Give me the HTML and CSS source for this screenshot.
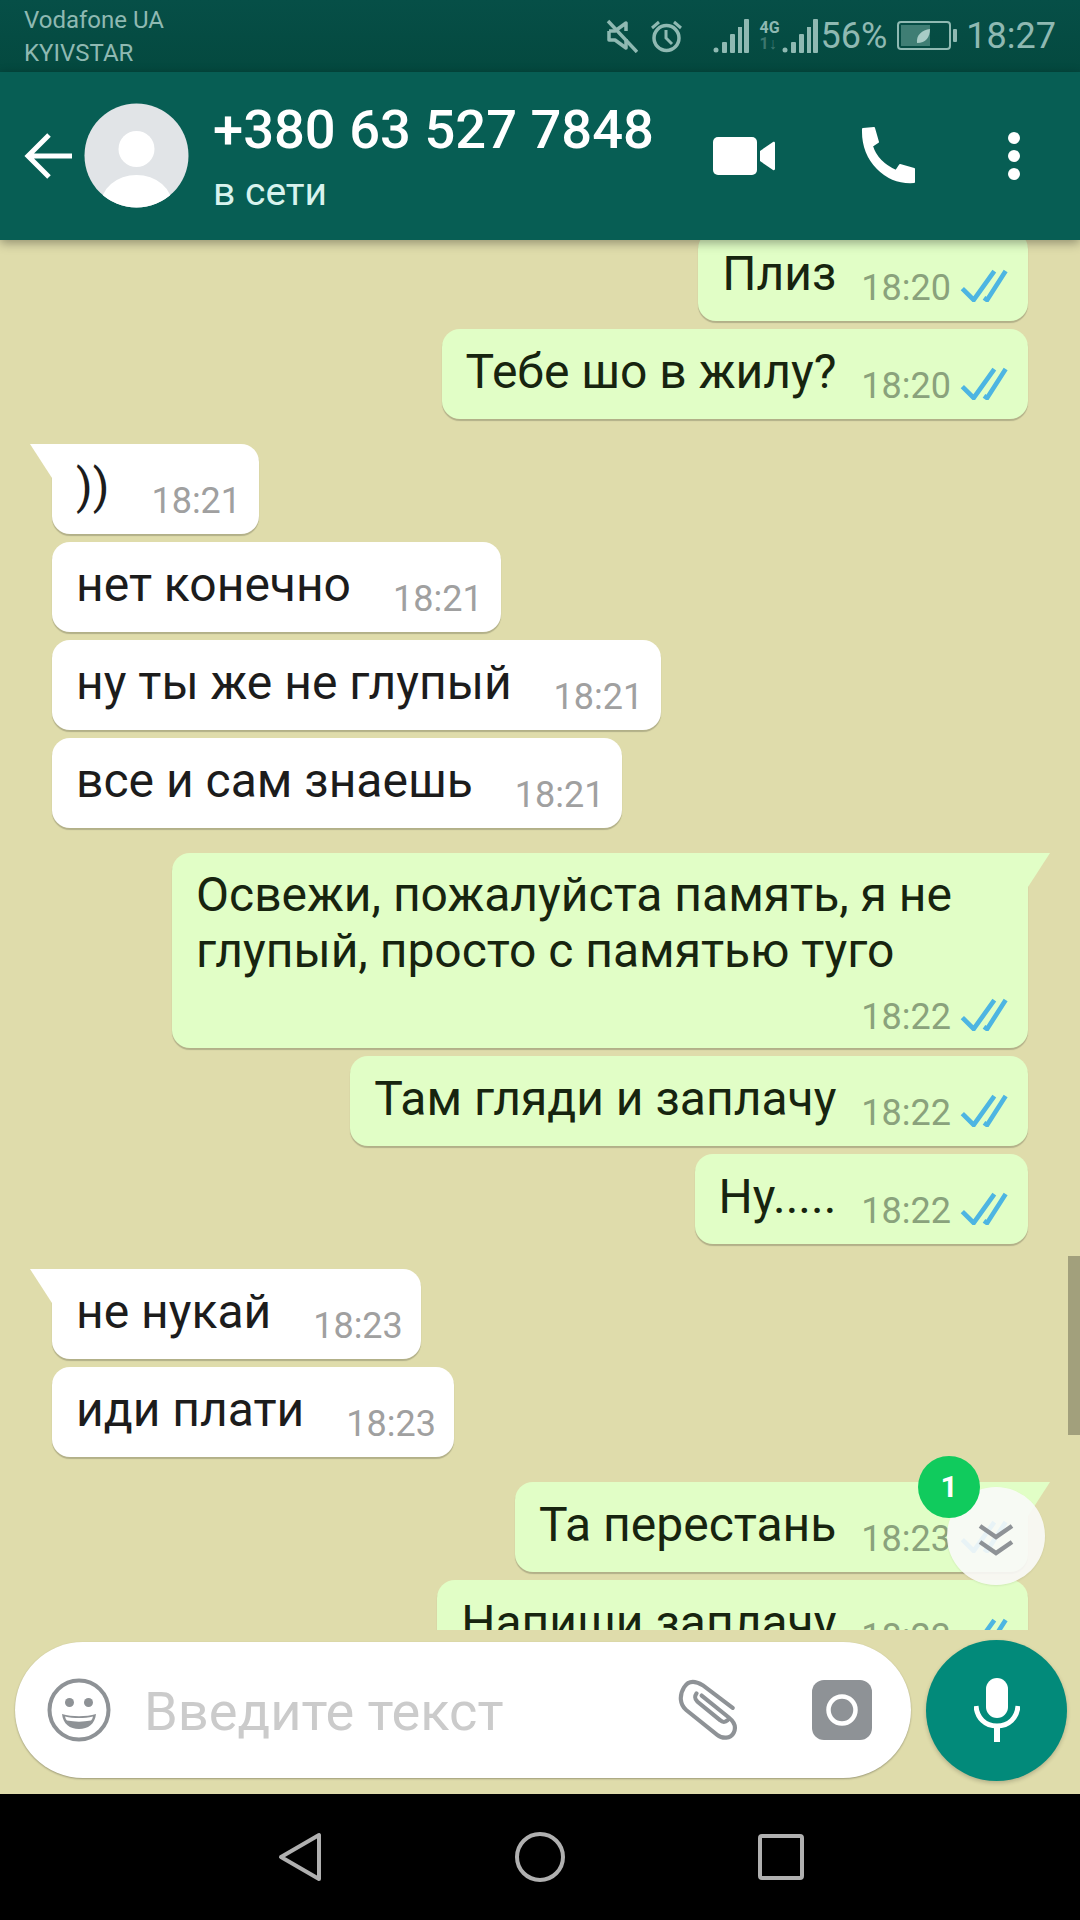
FILE: index.html
```html
<!DOCTYPE html>
<html lang="ru">
<head>
    <meta charset="UTF-8">
    <meta name="viewport" content="width=device-width, initial-scale=1.0">
    <title>WhatsApp</title>
    <link rel="stylesheet" href="styles.css">
</head>
<body>
    <svg class="defs" width="0" height="0">
        <symbol id="ticks" viewBox="0 0 46 32">
            <path d="M2 19l11 11L33 2M23 28l3 2L44 2" fill="none" stroke="#4db5e2" stroke-width="4.5"/>
        </symbol>
    </svg>

    <!-- Status bar -->
    <div class="statusbar">
        <div class="carriers">
            <div>Vodafone UA</div>
            <div>KYIVSTAR</div>
        </div>
        <div class="status-icons">
            <svg class="ic-mute" width="32" height="34" viewBox="0 0 32 34">
                <path d="M3 12h6l11-8v8M20 20v9l-11-8H3v-9" fill="none" stroke="#8fb9b2" stroke-width="3.5" stroke-linejoin="round"/>
                <path d="M2 2l29 31" stroke="#8fb9b2" stroke-width="3.5"/>
            </svg>
            <svg class="ic-alarm" width="33" height="34" viewBox="0 0 33 34">
                <circle cx="16.500" cy="19" r="12.500" fill="none" stroke="#8fb9b2" stroke-width="3.500"/>
                <path d="M16 11v8l6 6M2 9l7-6M31 9l-7-6" fill="none" stroke="#8fb9b2" stroke-width="3"/>
            </svg>
            <svg class="ic-signal" width="36" height="34" viewBox="0 0 36 34">
                <g fill="#8fb9b2"><circle cx="3" cy="31" r="2.500"/><rect x="9" y="23" width="5" height="11" rx="1"/><rect x="17" y="15" width="5" height="19" rx="1"/><rect x="25" y="8" width="4" height="26"/><rect x="31" y="0" width="5" height="34" rx="1"/></g>
            </svg>
            <div class="net">
                <span class="net-4g">4G</span>
                <span class="net-arrows">1↓</span>
            </div>
            <svg class="ic-signal2" width="36" height="34" viewBox="0 0 36 34">
                <g fill="#8fb9b2"><circle cx="3" cy="31" r="2.500"/><rect x="9" y="23" width="5" height="11" rx="1"/><rect x="17" y="15" width="5" height="19" rx="1"/><rect x="25" y="8" width="4" height="26"/><rect x="31" y="0" width="5" height="34" rx="1"/></g>
            </svg>
            <span class="status-text pct">56%</span>
            <svg class="ic-battery" width="61" height="30" viewBox="0 0 61 30">
                <rect x="1" y="1" width="52" height="27" rx="3" fill="none" stroke="#8fb9b2" stroke-width="2"/>
                <rect x="4" y="4" width="29" height="21" fill="#3f7e74"/>
                <rect x="56" y="8" width="4" height="13" rx="1" fill="#8fb9b2"/>
                <path d="M20 22c-1-8 5-13 13-14 0 8-4 14-13 14z" fill="#a9ccc6"/>
            </svg>
            <span class="status-text time-now">18:27</span>
        </div>
    </div>

    <!-- Toolbar -->
    <div class="toolbar">
        <svg class="back" width="50" height="48" viewBox="0 0 50 48">
            <path d="M48 24H4M25 3L4 24l21 21" fill="none" stroke="#fff" stroke-width="5"/>
        </svg>
        <svg class="avatar" width="105" height="105" viewBox="0 0 105 105">
            <defs><clipPath id="avatarClip"><circle cx="52.500" cy="52.500" r="52"/></clipPath></defs>
            <circle cx="52.500" cy="52.500" r="52" fill="#e1e4e7"/>
            <g clip-path="url(#avatarClip)" fill="#fff">
                <circle cx="52.500" cy="46" r="18"/>
                <ellipse cx="52.500" cy="103" rx="36" ry="31"/>
            </g>
        </svg>
        <div class="contact">
            <div class="contact-name">+380 63 527 7848</div>
            <div class="contact-status">в сети</div>
        </div>
        <div class="actions">
            <svg width="62" height="40" viewBox="0 0 62 40">
                <rect x="0" y="1" width="44" height="38" rx="5" fill="#fff"/>
                <path d="M47 15l13-9c1-.5 2 0 2 1v26c0 1-1 1.500-2 1l-13-9z" fill="#fff"/>
            </svg>
            <svg width="56" height="58" viewBox="0 0 56 58">
                <path d="M3 2l11-1 4 14-6 4c3 10 11 19 24 25l4-6 14 4v13c-28 2-52-21-51-53z" fill="#fff" stroke="#fff" stroke-linejoin="round" stroke-width="2"/>
            </svg>
            <svg width="14" height="50" viewBox="0 0 14 50">
                <circle cx="7" cy="7" r="6" fill="#fff"/>
                <circle cx="7" cy="25" r="6" fill="#fff"/>
                <circle cx="7" cy="43" r="6" fill="#fff"/>
            </svg>
        </div>
    </div>

    <!-- Chat -->
    <div class="chat">
        <div class="messages">
            <div class="msg out">
                <span class="msg-text">Плиз</span>
                <span class="meta"><span class="time">18:20</span><svg class="ticks"><use href="#ticks"/></svg></span>
            </div>
            <div class="msg out">
                <span class="msg-text">Тебе шо в жилу?</span>
                <span class="meta"><span class="time">18:20</span><svg class="ticks"><use href="#ticks"/></svg></span>
            </div>

            <div class="msg in first">
                <span class="msg-text">))</span>
                <span class="meta"><span class="time">18:21</span></span>
            </div>
            <div class="msg in">
                <span class="msg-text">нет конечно</span>
                <span class="meta"><span class="time">18:21</span></span>
            </div>
            <div class="msg in">
                <span class="msg-text">ну ты же не глупый</span>
                <span class="meta"><span class="time">18:21</span></span>
            </div>
            <div class="msg in">
                <span class="msg-text">все и сам знаешь</span>
                <span class="meta"><span class="time">18:21</span></span>
            </div>

            <div class="msg out first long">
                <span class="msg-text">Освежи, пожалуйста память, я не<br>глупый, просто с памятью туго</span>
                <span class="meta"><span class="time">18:22</span><svg class="ticks"><use href="#ticks"/></svg></span>
            </div>
            <div class="msg out">
                <span class="msg-text">Там гляди и заплачу</span>
                <span class="meta"><span class="time">18:22</span><svg class="ticks"><use href="#ticks"/></svg></span>
            </div>
            <div class="msg out">
                <span class="msg-text">Ну.....</span>
                <span class="meta"><span class="time">18:22</span><svg class="ticks"><use href="#ticks"/></svg></span>
            </div>

            <div class="msg in first">
                <span class="msg-text">не нукай</span>
                <span class="meta"><span class="time">18:23</span></span>
            </div>
            <div class="msg in">
                <span class="msg-text">иди плати</span>
                <span class="meta"><span class="time">18:23</span></span>
            </div>

            <div class="msg out first">
                <span class="msg-text">Та перестань</span>
                <span class="meta"><span class="time">18:23</span><svg class="ticks"><use href="#ticks"/></svg></span>
            </div>
            <div class="msg out">
                <span class="msg-text">Напиши заплачу</span>
                <span class="meta"><span class="time">18:23</span><svg class="ticks"><use href="#ticks"/></svg></span>
            </div>
        </div>

        <div class="scrollbar"></div>

        <div class="scroll-down">
            <svg width="38" height="34" viewBox="0 0 38 34">
                <path d="M3 3l16 11L35 3M3 19l16 11 16-11" fill="none" stroke="#8e9296" stroke-width="4.500"/>
            </svg>
        </div>
        <div class="unread">1</div>

        <div class="composer">
            <div class="input-pill">
                <svg class="ic-emoji" width="64" height="64" viewBox="0 0 64 64">
                    <circle cx="32" cy="32" r="29.500" fill="none" stroke="#8e9296" stroke-width="4"/>
                    <circle cx="22.500" cy="24.500" r="4.500" fill="#8e9296"/>
                    <circle cx="41.500" cy="24.500" r="4.500" fill="#8e9296"/>
                    <path d="M15 36c10 3 24 3 34 0-1 10-8 15-17 15s-16-5-17-15z" fill="#8e9296"/>
                    <path d="M18 38.500c9 2 19 2 28 0-.5 2-1 3-2 4-8 1.500-16 1.500-24 0-1-1-1.500-2-2-4z" fill="#fff"/>
                </svg>
                <span class="placeholder">Введите текст</span>
                <svg class="ic-clip" width="70" height="62" viewBox="0 0 64 60">
                    <path d="M22 16l26 21c5 4 8 9 5 15s-11 6-16 2L7 30C1 25 0 16 5 8s13-5 18-2l29 22M17 14c-2 3-2 5 1 8l22 18c2 2 5 2 7 0" fill="none" stroke="#8e9296" stroke-width="4" stroke-linecap="round"/>
                </svg>
                <svg class="ic-camera" width="60" height="60" viewBox="0 0 60 60">
                    <rect width="60" height="60" rx="12" fill="#8e9296"/>
                    <circle cx="30" cy="30" r="13.500" fill="none" stroke="#fff" stroke-width="4.500"/>
                </svg>
            </div>
            <div class="mic-btn">
                <svg width="46" height="64" viewBox="0 0 46 64">
                    <rect x="12" y="0" width="22" height="40" rx="11" fill="#fff"/>
                    <path d="M2 28c1 12 9 20 21 20s20-8 21-20" fill="none" stroke="#fff" stroke-width="5"/>
                    <rect x="20" y="46" width="6" height="18" fill="#fff"/>
                </svg>
            </div>
        </div>
    </div>

    <!-- Nav bar -->
    <div class="navbar">
        <svg width="44" height="50" viewBox="0 0 44 50">
            <path d="M41 3v44L3 25z" fill="none" stroke="#b0b0b0" stroke-width="4" stroke-linejoin="round"/>
        </svg>
        <svg width="50" height="50" viewBox="0 0 50 50">
            <circle cx="25" cy="25" r="23" fill="none" stroke="#b0b0b0" stroke-width="4"/>
        </svg>
        <svg width="46" height="46" viewBox="0 0 46 46">
            <rect x="2" y="2" width="42" height="42" rx="2" fill="none" stroke="#b0b0b0" stroke-width="4"/>
        </svg>
    </div>
</body>
</html>
```

FILE: styles.css
```css
html, body {
    margin: 0;
    padding: 0;
}
body {
    width: 1080px;
    height: 1920px;
    display: flex;
    flex-direction: column;
    overflow: hidden;
    font-family: Roboto, "Noto Sans", sans-serif;
    background-color: #000;
}
.defs {
    position: absolute;
}

/* Status bar */
.statusbar {
    height: 72px;
    flex: none;
    display: flex;
    justify-content: space-between;
    align-items: center;
    padding: 0 24px;
    background: linear-gradient(#064f47, #04493f);
    color: #8fb9b2;
}
.carriers {
    font-size: 24px;
    line-height: 33px;
    padding-top: 2px;
}
.status-icons {
    display: flex;
    align-items: center;
}
.ic-alarm {
    margin-left: 12px;
}
.ic-signal {
    margin-left: 30px;
}
.net {
    width: 22px;
    margin-left: 11px;
    display: flex;
    flex-direction: column;
    font-size: 16px;
    line-height: 16px;
    font-weight: 700;
}
.net-arrows {
    opacity: 0.4;
}
.status-text {
    font-size: 36px;
    line-height: 40px;
}
.pct {
    margin-left: 3px;
}
.ic-battery {
    margin-left: 10px;
}
.time-now {
    margin-left: 8px;
}

/* Toolbar */
.toolbar {
    height: 168px;
    flex: none;
    display: flex;
    align-items: center;
    padding-left: 24px;
    background-color: #075e54;
    box-shadow: 0 3px 10px rgba(0, 0, 0, 0.35);
    position: relative;
    z-index: 2;
    color: white;
}
.back {
    margin-right: 10px;
}
.avatar {
    margin-right: 24px;
    margin-top: -2px;
}
.contact {
    width: 500px;
}
.contact-name {
    font-size: 54.3px;
    line-height: 64px;
    font-weight: 500;
}
.contact-status {
    font-size: 39px;
    line-height: 44px;
    margin-top: 8px;
    color: #d8f3ee;
}
.actions {
    display: flex;
    align-items: center;
}
.actions svg:nth-child(2) {
    margin-left: 85px;
}
.actions svg:nth-child(3) {
    margin-left: 91px;
}

/* Chat */
.chat {
    flex: 1;
    display: flex;
    flex-direction: column;
    position: relative;
    background-color: #dfdcab;
    min-height: 0;
}
.messages {
    flex: 1;
    min-height: 0;
    overflow: hidden;
    display: flex;
    flex-direction: column;
    align-items: flex-start;
    gap: 8px;
    padding: 0 52px;
}
.msg {
    flex: none;
    position: relative;
    display: flex;
    height: 90px;
    box-sizing: border-box;
    padding: 0 18px 0 24px;
    border-radius: 18px;
    font-size: 48px;
    box-shadow: 0 2px 1px rgba(0, 0, 0, 0.2);
}
.msg:first-child {
    margin-top: -9px;
}
.msg.in {
    background-color: #fff;
    color: #1c1c1c;
}
.msg.in .meta {
    margin-left: 42px;
}
.msg.out {
    align-self: flex-end;
    background-color: #e1fec6;
    color: #17240f;
    padding-right: 20px;
}
.msg.first {
    margin-top: 17px;
}
.msg.in.first {
    border-top-left-radius: 0;
}
.msg.out.first {
    border-top-right-radius: 0;
}
.msg.first::before {
    content: "";
    position: absolute;
    top: 0;
    width: 22px;
    height: 34px;
}
.msg.in.first::before {
    left: -22px;
    background-color: #fff;
    clip-path: polygon(0 0, 100% 0, 100% 100%);
}
.msg.out.first::before {
    right: -22px;
    background-color: #e1fec6;
    clip-path: polygon(0 0, 100% 0, 0 100%);
}
.msg-text {
    line-height: 56px;
    padding-top: 15px;
    white-space: nowrap;
}
.meta {
    display: flex;
    align-items: flex-start;
    margin-left: 25px;
    padding-top: 36px;
}
.time {
    font-size: 36px;
    line-height: 42px;
    color: #a0a0a0;
}
.out .time {
    color: #8aa27c;
}
.ticks {
    width: 48px;
    height: 33px;
    margin-left: 9px;
    margin-top: 2px;
}
.msg.out.long {
    height: 195px;
    flex-direction: column;
    padding-right: 76px;
}
.msg.long .msg-text {
    padding-top: 14px;
}
.msg.long .meta {
    justify-content: flex-end;
    padding-top: 17px;
    margin-right: -56px;
}

.scrollbar {
    position: absolute;
    top: 1016px;
    right: 0;
    width: 12px;
    height: 179px;
    background-color: rgba(0, 0, 0, 0.27);
}
.scroll-down {
    position: absolute;
    left: 947px;
    top: 1247px;
    width: 98px;
    height: 98px;
    border-radius: 50%;
    background-color: rgba(250, 250, 248, 0.9);
    display: flex;
    align-items: center;
    justify-content: center;
    padding-top: 8px;
    box-sizing: border-box;
    box-shadow: 0 1px 2px rgba(0, 0, 0, 0.08);
}
.unread {
    position: absolute;
    left: 918px;
    top: 1216px;
    width: 62px;
    height: 62px;
    border-radius: 50%;
    background-color: #10cb5d;
    color: white;
    font-size: 30px;
    font-weight: 700;
    line-height: 62px;
    text-align: center;
}

/* Composer */
.composer {
    height: 164px;
    flex: none;
    display: flex;
    align-items: center;
    box-sizing: border-box;
    padding: 0 13px 4px 15px;
    gap: 15px;
}
.input-pill {
    flex: 1;
    height: 136px;
    display: flex;
    align-items: center;
    padding: 0 39px 0 32px;
    border-radius: 68px;
    background-color: #fff;
    box-shadow: 0 1px 2px rgba(0, 0, 0, 0.3);
}
.placeholder {
    flex: 1;
    margin-left: 33px;
    padding-top: 2px;
    font-size: 54.2px;
    color: #cbcbcb;
}
.ic-camera {
    margin-left: 65px;
}
.mic-btn {
    width: 141px;
    height: 141px;
    border-radius: 50%;
    background-color: #028a7a;
    display: flex;
    align-items: center;
    justify-content: center;
    box-shadow: 0 2px 4px rgba(0, 0, 0, 0.2);
}

/* Nav bar */
.navbar {
    height: 126px;
    flex: none;
    display: flex;
    align-items: center;
    justify-content: center;
    gap: 193px;
    padding-left: 2px;
    background-color: #000;
}
```
